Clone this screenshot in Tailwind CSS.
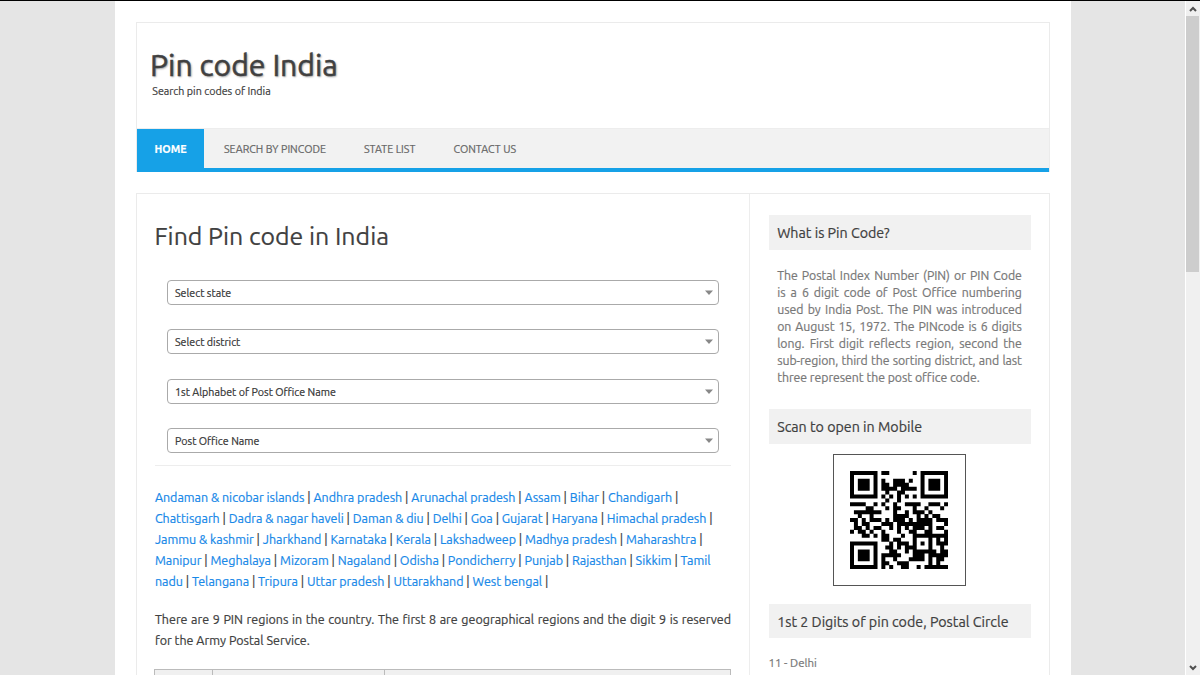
<!DOCTYPE html>
<html lang="en">
<head>
    <meta charset="UTF-8">
    <meta name="viewport" content="width=device-width, initial-scale=1.0">
    <title>Pin code India</title>
    <script src="https://cdn.jsdelivr.net/npm/@tailwindcss/browser@4"></script>
</head>
<body class="h-screen overflow-hidden bg-[#e5e5e5] border-t border-black flex font-['Ubuntu','Noto_Sans',sans-serif] text-[#404040] [-webkit-text-stroke:0.2px]">
    <div class="flex-1 h-full overflow-hidden pl-[115px]">
        <div class="w-[956px] h-full bg-white pl-[21px] pr-[21px] pt-[21px]">

            <!-- Header -->
            <header class="h-[150px] border border-b-0 border-[#ebebeb] flex flex-col">
                <div class="h-[105px] pl-[13px] pt-[24px]">
                    <div class="text-[30.2px] leading-[37px] whitespace-nowrap [-webkit-text-stroke:0.5px] text-shadow-[1px_1px_2px_rgb(0_0_0_/_0.4)]">Pin code India</div>
                    <div class="pl-[2.3px] text-[10.7px] leading-[14px] whitespace-nowrap">Search pin codes of India</div>
                </div>
                <nav class="h-[44px] bg-[#f2f2f2] border-t border-t-[#ededed] border-b-4 border-b-[#16a1e7] flex text-[10.7px] text-[#666]">
                    <a class="w-[67px] h-[43px] bg-[#16a1e7] text-white font-bold text-center leading-[40px]">HOME</a>
                    <a class="ml-[20px] w-[140px] leading-[40px] whitespace-nowrap">SEARCH BY PINCODE</a>
                    <a class="w-[89.5px] leading-[40px] whitespace-nowrap">STATE LIST</a>
                    <a class="leading-[40px] whitespace-nowrap">CONTACT US</a>
                </nav>
            </header>

            <div class="mt-[21px] h-[520px] border border-[#ebebeb] flex">
                <!-- Main column -->
                <main class="w-[613px] shrink-0 border-r border-[#ededed] pl-[17.5px] pr-[18px] pt-[25px]">
                    <h1 class="text-[24.9px] leading-[34px] whitespace-nowrap">Find Pin code in India</h1>

                    <div class="mt-[27px] pl-[12px] flex flex-col gap-[24.3px] text-[10.7px] leading-[24px] text-[#333]">
                        <div class="w-[552px] h-[25px] border border-[#aaa] rounded flex items-center justify-between pl-[7.5px] pr-[5px]">
                            <span class="pt-px">Select state</span>
                            <svg class="w-[8px] h-[5px]" viewBox="0 0 8 5"><path d="M0 .5h8L4 5z" fill="#888"/></svg>
                        </div>
                        <div class="w-[552px] h-[25px] border border-[#aaa] rounded flex items-center justify-between pl-[7.5px] pr-[5px]">
                            <span class="pt-px">Select district</span>
                            <svg class="w-[8px] h-[5px]" viewBox="0 0 8 5"><path d="M0 .5h8L4 5z" fill="#888"/></svg>
                        </div>
                        <div class="w-[552px] h-[25px] border border-[#aaa] rounded flex items-center justify-between pl-[7.5px] pr-[5px]">
                            <span class="pt-px">1st Alphabet of Post Office Name</span>
                            <svg class="w-[8px] h-[5px]" viewBox="0 0 8 5"><path d="M0 .5h8L4 5z" fill="#888"/></svg>
                        </div>
                        <div class="w-[552px] h-[25px] border border-[#aaa] rounded flex items-center justify-between pl-[7.5px] pr-[5px]">
                            <span class="pt-px">Post Office Name</span>
                            <svg class="w-[8px] h-[5px]" viewBox="0 0 8 5"><path d="M0 .5h8L4 5z" fill="#888"/></svg>
                        </div>
                    </div>

                    <hr class="mt-[12px] border-[#ededed]">

                    <!-- States -->
                    <div class="mt-[21px] pl-[0.4px] text-[12.5px] leading-[20.9px] tracking-[-0.015px] whitespace-nowrap [&_a]:text-[#1788e8]">
                        <div><a>Andaman &amp; nicobar islands</a> | <a>Andhra pradesh</a> | <a>Arunachal pradesh</a> | <a>Assam</a> | <a>Bihar</a> | <a>Chandigarh</a> |</div>
                        <div><a>Chattisgarh</a> | <a>Dadra &amp; nagar haveli</a> | <a>Daman &amp; diu</a> | <a>Delhi</a> | <a>Goa</a> | <a>Gujarat</a> | <a>Haryana</a> | <a>Himachal pradesh</a> |</div>
                        <div><a>Jammu &amp; kashmir</a> | <a>Jharkhand</a> | <a>Karnataka</a> | <a>Kerala</a> | <a>Lakshadweep</a> | <a>Madhya pradesh</a> | <a>Maharashtra</a> |</div>
                        <div><a>Manipur</a> | <a>Meghalaya</a> | <a>Mizoram</a> | <a>Nagaland</a> | <a>Odisha</a> | <a>Pondicherry</a> | <a>Punjab</a> | <a>Rajasthan</a> | <a>Sikkim</a> | <a>Tamil</a></div>
                        <div><a>nadu</a> | <a>Telangana</a> | <a>Tripura</a> | <a>Uttar pradesh</a> | <a>Uttarakhand</a> | <a>West bengal</a> |</div>
                    </div>

                    <p class="mt-[18px] pl-[0.4px] text-[12.5px] leading-[20.8px] text-justify">There are 9 PIN regions in the country. The first 8 are geographical regions and the digit 9 is reserved for the Army Postal Service.</p>

                    <div class="mt-[18px] -ml-[0.5px] h-[30px] w-[577px] border border-[#bbb] bg-[#f0f0f0] flex">
                        <div class="w-[58px] border-r border-[#bbb]"></div>
                        <div class="w-[172px] border-r border-[#bbb]"></div>
                    </div>
                </main>

                <!-- Sidebar -->
                <aside class="pl-[18.5px] pt-[21px] w-[280.5px]">
                    <h3 class="h-[35px] bg-[#f1f1f1] pl-[8.7px] text-[14.25px] leading-[36px] whitespace-nowrap">What is Pin Code?</h3>
                    <p class="mt-[17px] px-[8.7px] text-[12.3px] leading-[17px] tracking-[-0.035px] text-justify text-[#777]">The Postal Index Number (PIN) or PIN Code is a 6 digit code of Post Office numbering used by India Post. The PIN was introduced on August 15, 1972. The PINcode is 6 digits long. First digit reflects region, second the <span class="tracking-[-0.08px]">sub-region, third the sorting district, and last</span> three represent the post office code.</p>

                    <h3 class="mt-[23px] h-[35px] bg-[#f1f1f1] pl-[8.7px] text-[14.25px] leading-[36px] whitespace-nowrap">Scan to open in Mobile</h3>
                    <div class="mt-[10px] ml-[64px] w-[133px] h-[132px] border border-[#555] pt-[16px] pl-[16px]">
                        <svg id="qr" class="w-[98px] h-[98px]" viewBox="0 0 25 25"><path id="qrPath" fill="#000"/></svg>
                    </div>

                    <h3 class="mt-[18px] h-[34px] bg-[#f1f1f1] pl-[8.7px] text-[14.25px] leading-[36px] whitespace-nowrap">1st 2 Digits of pin code, Postal Circle</h3>
                    <div class="mt-[16px] text-[11.5px] leading-[18px] text-[#777]">11 - Delhi</div>
                </aside>
            </div>
        </div>
    </div>

    <!-- Scrollbar -->
    <div class="w-[15px] h-full bg-[#f0f0f0] border-l border-white flex flex-col items-center">
        <div class="h-[15px] flex items-center"><svg class="w-[8px] h-[6px]" viewBox="0 0 8 6"><path d="M1 5l3-3 3 3" fill="none" stroke="#505050" stroke-width="2"/></svg></div>
        <div class="w-[13px] mr-px h-[256px] bg-[#cdcdcd]"></div>
        <div class="mt-auto h-[15px] flex items-center"><svg class="w-[8px] h-[6px]" viewBox="0 0 8 6"><path d="M1 1l3 3 3-3" fill="none" stroke="#505050" stroke-width="2"/></svg></div>
    </div>

    <script>
        // QR code, version 2-L, mask 3
        function qrModules(text) {
            const N = 25;
            const m = Array.from({ length: N }, () => Array(N).fill(null));

            const square = (r0, c0, rad, dark) => {
                for (let r = -rad; r <= rad; r++) for (let c = -rad; c <= rad; c++) {
                    const y = r0 + r, x = c0 + c;
                    if (y >= 0 && y < N && x >= 0 && x < N) m[y][x] = dark(Math.max(Math.abs(r), Math.abs(c)));
                }
            };
            for (let i = 0; i < N; i++) m[6][i] = m[i][6] = i % 2 === 0;
            [[3, 3], [3, 21], [21, 3]].forEach(([r, c]) => square(r, c, 4, d => d !== 2 && d !== 4));
            square(18, 18, 2, d => d !== 1);

            const fmt = 0b111100010011101;
            for (let i = 0; i < 15; i++) {
                const b = ((fmt >> i) & 1) === 1;
                if (i < 6) m[i][8] = b;
                else if (i === 6) m[7][8] = b;
                else if (i === 7) m[8][8] = b;
                else if (i === 8) m[8][7] = b;
                else m[8][14 - i] = b;
                if (i < 8) m[8][N - 1 - i] = b;
                else m[N - 15 + i][8] = b;
            }
            m[N - 8][8] = true;

            // data codewords
            let bits = '0100' + text.length.toString(2).padStart(8, '0');
            for (const ch of text) bits += ch.charCodeAt(0).toString(2).padStart(8, '0');
            bits += '0000';
            const data = bits.match(/.{8}/g).map(b => parseInt(b, 2));
            for (let pad = 0xec; data.length < 34; pad ^= 0xec ^ 0x11) data.push(pad);

            // error correction
            const mul = (a, b) => {
                let z = 0;
                for (let i = 7; i >= 0; i--) z = (z << 1) ^ ((z >> 7) * 0x11d) ^ (((b >> i) & 1) * a);
                return z;
            };
            const gen = Array(10).fill(0);
            gen[9] = 1;
            for (let i = 0, root = 1; i < 10; i++, root = mul(root, 2)) {
                for (let j = 0; j < 10; j++) gen[j] = mul(gen[j], root) ^ (gen[j + 1] || 0);
            }
            const rem = Array(10).fill(0);
            data.forEach(b => {
                const f = b ^ rem.shift();
                rem.push(0);
                gen.forEach((g, i) => rem[i] ^= mul(g, f));
            });
            const all = data.concat(rem);

            let k = 0;
            for (let right = N - 1, up = true; right > 0; right -= 2, up = !up) {
                if (right === 6) right = 5;
                for (let v = 0; v < N; v++) for (let j = 0; j < 2; j++) {
                    const c = right - j, r = up ? N - 1 - v : v;
                    if (m[r][c] !== null) continue;
                    const bit = k < all.length * 8 && ((all[k >> 3] >> (7 - (k & 7))) & 1) === 1;
                    k++;
                    m[r][c] = bit !== ((r + c) % 3 === 0);
                }
            }
            return m;
        }

        let d = '';
        qrModules('https://pincodeindia.net.in/').forEach((row, r) => row.forEach((on, c) => {
            if (on) d += `M${c} ${r}h1.02v1.02h-1.02z`;
        }));
        document.getElementById('qrPath').setAttribute('d', d);
    </script>
</body>
</html>
